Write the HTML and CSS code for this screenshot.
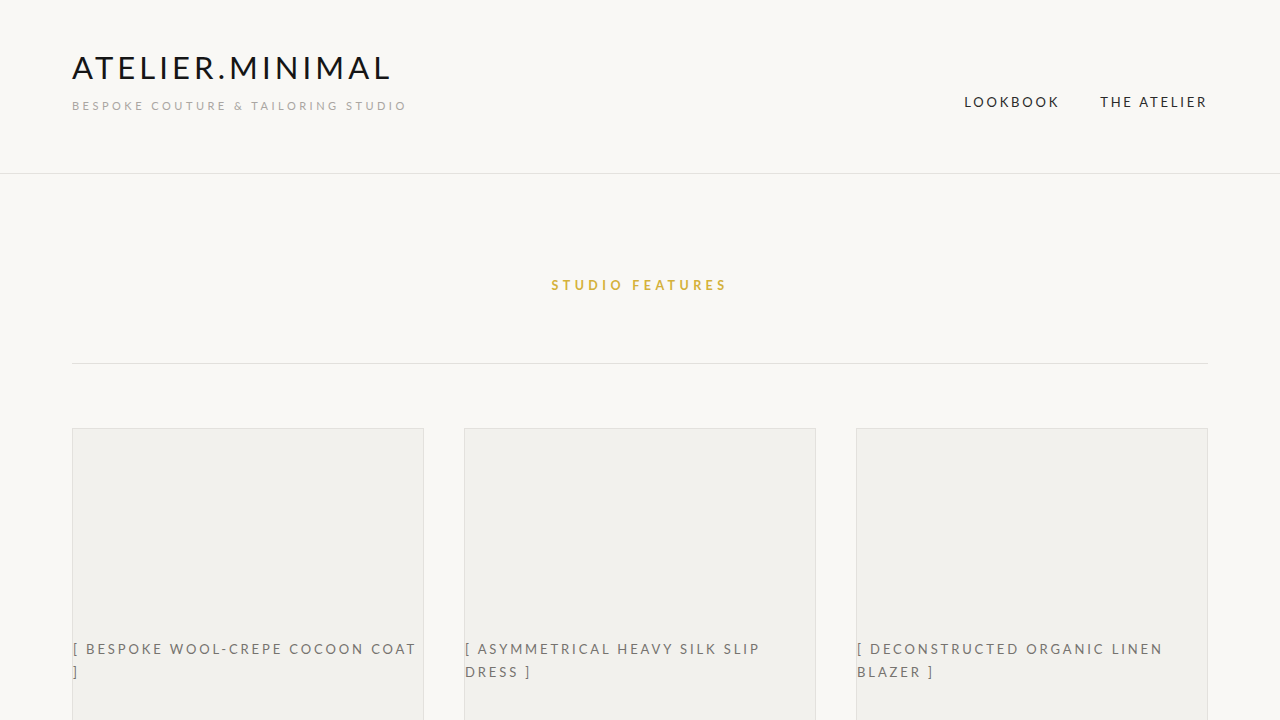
FILE: index.html
```html
<!DOCTYPE html>
<html lang="en">
<head>
<meta charset="utf-8">
<title>Atelier.Minimal</title>
<link rel="stylesheet" href="styles.css">
</head>
<body>
<header class="site-header">
  <div class="brand">
    <div class="brand-name">ATELIER.MINIMAL</div>
    <div class="brand-tag">BESPOKE COUTURE &amp; TAILORING STUDIO</div>
  </div>
  <nav class="nav">
    <a href="#">LOOKBOOK</a>
    <a href="#">THE ATELIER</a>
  </nav>
</header>
<main class="main">
  <h2 class="section-title">STUDIO FEATURES</h2>
  <hr class="rule">
  <div class="grid">
    <div class="card">
      <div class="card-img"></div>
      <p class="card-caption">[ BESPOKE WOOL-CREPE COCOON COAT ]</p>
    </div>
    <div class="card">
      <div class="card-img"></div>
      <p class="card-caption">[ ASYMMETRICAL HEAVY SILK SLIP DRESS ]</p>
    </div>
    <div class="card">
      <div class="card-img"></div>
      <p class="card-caption">[ DECONSTRUCTED ORGANIC LINEN BLAZER ]</p>
    </div>
  </div>
</main>
</body>
</html>
```

FILE: styles.css
```css
* { box-sizing: border-box; }
html, body { margin: 0; padding: 0; }
body {
  background: #f9f8f5;
  font-family: "Lato", "Liberation Sans", sans-serif;
  color: #1e1e1e;
}
.site-header {
  height: 174px;
  border-bottom: 1px solid #e4e2de;
  padding: 0 72px;
  display: flex;
  justify-content: space-between;
  align-items: center;
}
.brand { padding-bottom: 13px; }
.brand-name {
  font-family: "Lato", sans-serif;
  font-weight: 400;
  font-size: 31px;
  letter-spacing: 4.1px;
  line-height: 40px;
  color: #151515;
}
.brand-tag {
  margin-top: 11px;
  font-family: "Lato", sans-serif;
  font-size: 11px;
  letter-spacing: 3.5px;
  color: #aaa6a2;
  line-height: 16px;
}
.nav {
  display: flex;
  gap: 40px;
  padding-top: 30px;
}
.nav a {
  font-family: "Lato", sans-serif;
  font-size: 13px;
  letter-spacing: 2.8px;
  color: #2a2a2a;
  text-decoration: none;
}
.main { padding: 0 72px; }
.section-title {
  margin: 0;
  padding-top: 104px;
  text-align: center;
  font-family: "Lato", sans-serif;
  font-weight: 700;
  font-size: 12.5px;
  letter-spacing: 4.4px;
  line-height: 16px;
  color: #d4b13a;
}
.rule {
  margin: 69px 0 0;
  border: 0;
  border-top: 1px solid #e2e0dc;
}
.grid {
  margin-top: 64px;
  display: grid;
  grid-template-columns: repeat(3, 1fr);
  gap: 40px;
}
.card {
  background: #f2f1ed;
  border: 1px solid #e3e1dd;
  height: 320px;
}
.card-img { height: 209px; }
.card-caption {
  margin: 0;
  font-family: "Lato", sans-serif;
  font-size: 13px;
  letter-spacing: 2.9px;
  line-height: 23px;
  color: #76736f;
}
```
